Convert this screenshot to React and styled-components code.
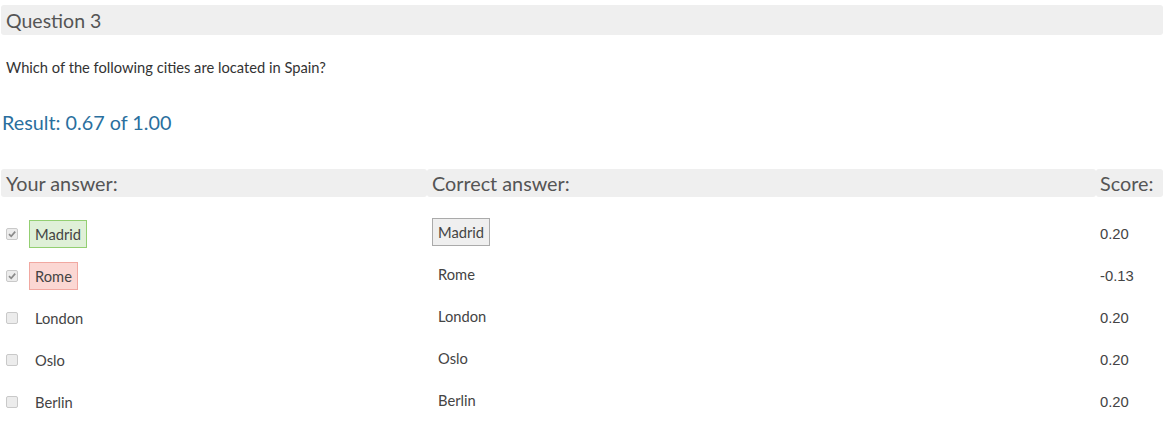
import React from "react";
import styled, { createGlobalStyle } from "styled-components";

const GlobalStyle = createGlobalStyle`
  body {
    margin: 0;
    background: #fff;
    font-family: Lato, "Open Sans", sans-serif;
    color: #333;
  }
`;

const Page = styled.div`
  padding: 5px 0 0 1px;
`;

const QuestionBar = styled.div`
  background: #efefef;
  border-radius: 3px;
  height: 30px;
  display: flex;
  align-items: center;
  padding-left: 5px;
  font-size: 19.5px;
  color: #555;
`;

const Prompt = styled.p`
  margin: 23px 0 0 5px;
  font-size: 14.7px;
  line-height: 18px;
  color: #333;
`;

const Result = styled.div`
  margin: 34px 0 0 1px;
  font-size: 19.8px;
  line-height: 24px;
  color: #2a6f9e;
`;

const Table = styled.div`
  margin-top: 35px;
  display: grid;
  grid-template-columns: 426px 669px 1fr;
`;

const HeadCell = styled.div`
  background: #efefef;
  border-radius: 3px;
  height: 28px;
  display: flex;
  align-items: center;
  padding-left: ${(p) => p.$pad || 5}px;
  font-size: 19.8px;
  color: #555;
  margin-bottom: 16px;
`;

const Cell = styled.div`
  height: 42px;
  display: flex;
  align-items: center;
  padding-left: ${(p) => p.$pad || 0}px;
  transform: translateY(${(p) => p.$shift || 0}px);
`;

const Check = styled.span`
  width: 12px;
  height: 12px;
  box-sizing: border-box;
  border: 1px solid #c9c9c9;
  border-radius: 2px;
  background: #ececec;
  margin-right: 11px;
  display: flex;
  align-items: center;
  justify-content: center;
`;

const colors = {
  right: { bg: "#dff0d8", border: "#93cf72" },
  wrong: { bg: "#fbd7d3", border: "#f1a8a1" },
  key: { bg: "#efefef", border: "#aaa" },
};

const Label = styled.span`
  font-size: 14.7px;
  color: #444;
  padding: ${(p) => (p.$kind ? "5px 5px" : "0 5px")};
  line-height: 16px;
  background: ${(p) => (p.$kind ? colors[p.$kind].bg : "transparent")};
  border: 1px solid ${(p) => (p.$kind ? colors[p.$kind].border : "transparent")};
`;

const Score = styled.span`
  font-family: "Liberation Sans", Arial, sans-serif;
  font-size: 14.8px;
  color: #444;
`;

const rows = [
  { city: "Madrid", checked: true, kind: "right", key: true, score: "0.20" },
  { city: "Rome", checked: true, kind: "wrong", key: false, score: "-0.13" },
  { city: "London", checked: false, score: "0.20" },
  { city: "Oslo", checked: false, score: "0.20" },
  { city: "Berlin", checked: false, score: "0.20" },
];

function Box({ checked }) {
  return (
    <Check>
      {checked && (
        <svg width="10" height="10" viewBox="0 0 10 10">
          <path d="M2 5.2 L4.2 7.3 L8.2 2.6" fill="none" stroke="#8a8a8a" strokeWidth="1.7" />
        </svg>
      )}
    </Check>
  );
}

export default function App() {
  return (
    <Page>
      <GlobalStyle />
      <QuestionBar>Question 3</QuestionBar>
      <Prompt>Which of the following cities are located in Spain?</Prompt>
      <Result>Result: 0.67 of 1.00</Result>
      <Table>
        <HeadCell>Your answer:</HeadCell>
        <HeadCell $pad={5}>Correct answer:</HeadCell>
        <HeadCell $pad={4}>Score:</HeadCell>
        {rows.map((r) => (
          <React.Fragment key={r.city}>
            <Cell $pad={5}>
              <Box checked={r.checked} />
              <Label $kind={r.kind}>{r.city}</Label>
            </Cell>
            <Cell $pad={5} $shift={-2}>
              <Label $kind={r.key ? "key" : undefined}>{r.city}</Label>
            </Cell>
            <Cell $pad={4}>
              <Score>{r.score}</Score>
            </Cell>
          </React.Fragment>
        ))}
      </Table>
    </Page>
  );
}
